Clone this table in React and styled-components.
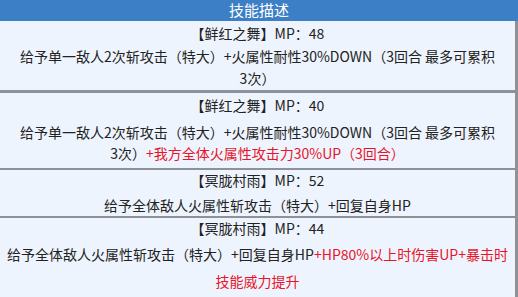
import React from "react";
import styled, { createGlobalStyle } from "styled-components";

const Global = createGlobalStyle`
  html, body { margin: 0; padding: 0; background: #ffffff; }
  body { width: 518px; height: 297px; overflow: hidden; }
`;

const Table = styled.div`
  width: 518px;
  font-family: "Microsoft YaHei", "Noto Sans CJK SC", "Noto Sans", sans-serif;
  color: #222222;
  font-size: 14px;
`;

const Header = styled.div`
  height: 21px;
  line-height: 20px;
  background: #3c7fc6;
  color: #ffffff;
  font-size: 15px;
  text-align: center;
`;

const Row = styled.div`
  display: flex;
  flex-direction: column;
  align-items: center;
  gap: ${(p) => p.$gap}px;
  height: ${(p) => p.$h}px;
  box-sizing: border-box;
  padding-top: ${(p) => p.$pt}px;
  background: #eef4fd;
  border-right: 3px solid #8e9298;
  border-bottom: ${(p) => p.$bb}px solid #8e9298;
  text-align: center;
`;

const Title = styled.div`
  line-height: ${(p) => p.$lh}px;
  white-space: nowrap;
`;

const Desc = styled.div`
  line-height: ${(p) => p.$lh}px;
  padding: 0 2px;
`;

const Red = styled.span`
  color: #e8152a;
`;

const rows = [
  {
    h: 72, pt: 1, gap: 1, bb: 3, tlh: 22, dlh: 22,
    title: "【鲜红之舞】MP：48",
    desc: <>给予单一敌人2次斩攻击（特大）+火属性耐性30%DOWN（3回合 最多可累积<br />3次）</>,
  },
  {
    h: 77, pt: 1, gap: 6, bb: 2, tlh: 22, dlh: 21,
    title: "【鲜红之舞】MP：40",
    desc: <>给予单一敌人2次斩攻击（特大）+火属性耐性30%DOWN（3回合 最多可累积<br />3次）<Red>+我方全体火属性攻击力30%UP（3回合）</Red></>,
  },
  {
    h: 48, pt: 0, gap: 5, bb: 2, tlh: 20, dlh: 20,
    title: "【冥胧村雨】MP：52",
    desc: <>给予全体敌人火属性斩攻击（特大）+回复自身HP</>,
  },
  {
    h: 79, pt: 0, gap: 3, bb: 0, tlh: 20, dlh: 27,
    title: "【冥胧村雨】MP：44",
    desc: <>给予全体敌人火属性斩攻击（特大）+回复自身HP<Red>+HP80%以上时伤害UP+暴击时<br />技能威力提升</Red></>,
  },
];

export default function App() {
  return (
    <>
      <Global />
      <Table>
        <Header>技能描述</Header>
        {rows.map((r, i) => (
          <Row key={i} $h={r.h} $pt={r.pt} $gap={r.gap} $bb={r.bb}>
            <Title $lh={r.tlh}>{r.title}</Title>
            <Desc $lh={r.dlh}>{r.desc}</Desc>
          </Row>
        ))}
      </Table>
    </>
  );
}
